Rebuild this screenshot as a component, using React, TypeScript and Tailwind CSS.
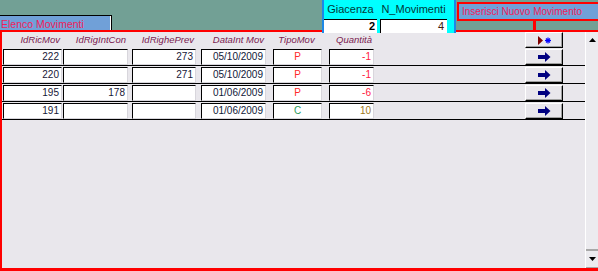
const cols = [
  { box: 'ml-[1px] w-[59px]', head: 'IdRicMov', align: 'text-right' },
  { box: 'ml-[1px] w-[65px]', head: 'IdRigIntCon', align: 'text-right' },
  { box: 'ml-[4px] w-[64px]', head: 'IdRighePrev', align: 'text-right' },
  { box: 'ml-[5px] w-[65px]', head: 'DataInt Mov', align: 'text-right' },
  { box: 'ml-[7px] w-[49px]', head: 'TipoMov', align: 'text-center' },
  { box: 'ml-[7px] w-[45px]', head: 'Quantità', align: 'text-right' },
]

const rows = [
  { ric: '222', rig: '', prev: '273', data: '05/10/2009', tipo: 'P', qta: '-1' },
  { ric: '220', rig: '', prev: '271', data: '05/10/2009', tipo: 'P', qta: '-1' },
  { ric: '195', rig: '178', prev: '', data: '01/06/2009', tipo: 'P', qta: '-6' },
  { ric: '191', rig: '', prev: '', data: '01/06/2009', tipo: 'C', qta: '10' },
]

const raised =
  'border-t border-l border-t-white border-l-white border-b border-r border-b-black border-r-black shadow-[inset_-1px_-1px_0_#a0a0a0] bg-[#e9e7ec]'

function ArrowIcon() {
  return (
    <svg width="13" height="10" viewBox="0 0 13 10">
      <rect x="0" y="3" width="7" height="4" fill="#000080" />
      <polygon points="7,0 12.5,5 7,10" fill="#000080" />
    </svg>
  )
}

function NewRecordIcon() {
  return (
    <svg width="13" height="9" viewBox="0 0 13 9">
      <polygon points="0,0 5,4.5 0,9" fill="#800000" />
      <g stroke="#0000ff" strokeWidth="1.2">
        <line x1="7" y1="4.5" x2="13" y2="4.5" />
        <line x1="10" y1="1.5" x2="10" y2="7.5" />
        <line x1="8" y1="2.5" x2="12" y2="6.5" />
        <line x1="12" y1="2.5" x2="8" y2="6.5" />
      </g>
    </svg>
  )
}

function Field({ cls, align, color, children }: { cls: string; align: string; color: string; children?: string }) {
  return (
    <div
      className={`${cls} ${align} ${color} h-[16px] shrink-0 bg-white border-t border-l border-black border-b border-r border-b-[#d8d6dc] border-r-[#d8d6dc] px-[2px] text-[10px] leading-[14px]`}
    >
      {children}
    </div>
  )
}

export default function App() {
  return (
    <div className="w-[598px] h-[271px] overflow-hidden flex flex-col bg-[#72a095] font-['Liberation_Sans',Arial,sans-serif]">
      {/* top bar */}
      <div className="h-[30px] shrink-0 flex items-start">
        <div className="mt-[15px] h-[15px] w-[112px] shrink-0 bg-[#70a0d8] border-t border-r border-black shadow-[inset_-1px_0_0_#fff] pl-[1px] pt-[1px] text-[10.5px] leading-[14px] text-[#f0205a]">
          Elenco Movimenti
        </div>

        <div className="relative z-10 ml-[210px] h-[33px] w-[134px] shrink-0 flex flex-col bg-[#00ffff] border-l-2 border-r-2 border-[#1e88e5]">
          <div className="h-[19px] flex items-center text-[11px] text-[#003838]">
            <div className="w-[53px] text-center">Giacenza</div>
            <div className="ml-[3px] w-[67px] text-center">N_Movimenti</div>
          </div>
          <div className="h-[14px] flex">
            <div className="w-[53px] bg-white border-t border-black text-right pr-[2px] text-[11px] leading-[13px] font-bold text-black">
              2
            </div>
            <div className="ml-[3px] w-[67px] bg-white border-t border-l border-black text-right pr-[3px] text-[11px] leading-[13px] text-[#402010]">
              4
            </div>
          </div>
        </div>

        <div className="ml-[1px] mt-[2px] shrink-0 flex flex-col">
          <div className="h-[19px] w-[150px] border-2 border-[#ff0000] bg-[#70a0d8] pl-[3px] text-[10px] leading-[15px] text-[#f0205a]">
            Inserisci Nuovo Movimento
          </div>
          <div className="ml-[76px] w-[3px] h-[9px] bg-[#ff0000]" />
        </div>
      </div>

      {/* main */}
      <div className="flex-1 flex border-t-2 border-l-2 border-b-[3px] border-[#ff0000] bg-[#e9e7ec]">
        <div className="flex-1 flex flex-col">
          <div className="h-[16px] flex items-center shrink-0">
            {cols.map((c) => (
              <div
                key={c.head}
                className={`${c.box} ${c.align} shrink-0 pr-[2px] text-[9.5px] italic text-[#7a2050] leading-[14px]`}
              >
                {c.head}
              </div>
            ))}
            <div className={`ml-[151px] w-[38px] h-[16px] shrink-0 flex items-center justify-center ${raised}`}>
              <NewRecordIcon />
            </div>
          </div>

          {rows.map((r, i) => (
            <div key={i} className="h-[18px] pt-[1px] flex items-start shrink-0 border-b border-black">
              <Field cls={cols[0].box} align="text-right" color="text-[#181838]">{r.ric}</Field>
              <Field cls={cols[1].box} align="text-right" color="text-[#181838]">{r.rig}</Field>
              <Field cls={cols[2].box} align="text-right" color="text-[#181838]">{r.prev}</Field>
              <Field cls={cols[3].box} align="text-right" color="text-[#101838]">{r.data}</Field>
              <Field cls={cols[4].box} align="text-center" color={r.tipo === 'P' ? 'text-[#ff2a2a]' : 'text-[#2a9a5a]'}>
                {r.tipo}
              </Field>
              <Field cls={cols[5].box} align="text-right" color={r.qta.startsWith('-') ? 'text-[#ff2040]' : 'text-[#a07820]'}>
                {r.qta}
              </Field>
              <div className={`ml-[151px] w-[38px] h-[16px] shrink-0 flex items-center justify-center ${raised}`}>
                <ArrowIcon />
              </div>
            </div>
          ))}
        </div>

        {/* scrollbar */}
        <div className="w-[13px] shrink-0 flex flex-col border-l border-white bg-[#ecebef]">
          <div className="h-[16px] flex items-center justify-center">
            <svg width="7" height="4" viewBox="0 0 7 4">
              <polygon points="3.5,0 7,4 0,4" fill="#000" />
            </svg>
          </div>
          <div className="flex-1" />
          <div className="h-[19px] border-t-2 border-[#a8a8a8] border-b border-b-[#a8a8a8] flex items-center justify-center">
            <svg width="7" height="4" viewBox="0 0 7 4">
              <polygon points="0,0 7,0 3.5,4" fill="#000" />
            </svg>
          </div>
        </div>
      </div>
    </div>
  )
}
